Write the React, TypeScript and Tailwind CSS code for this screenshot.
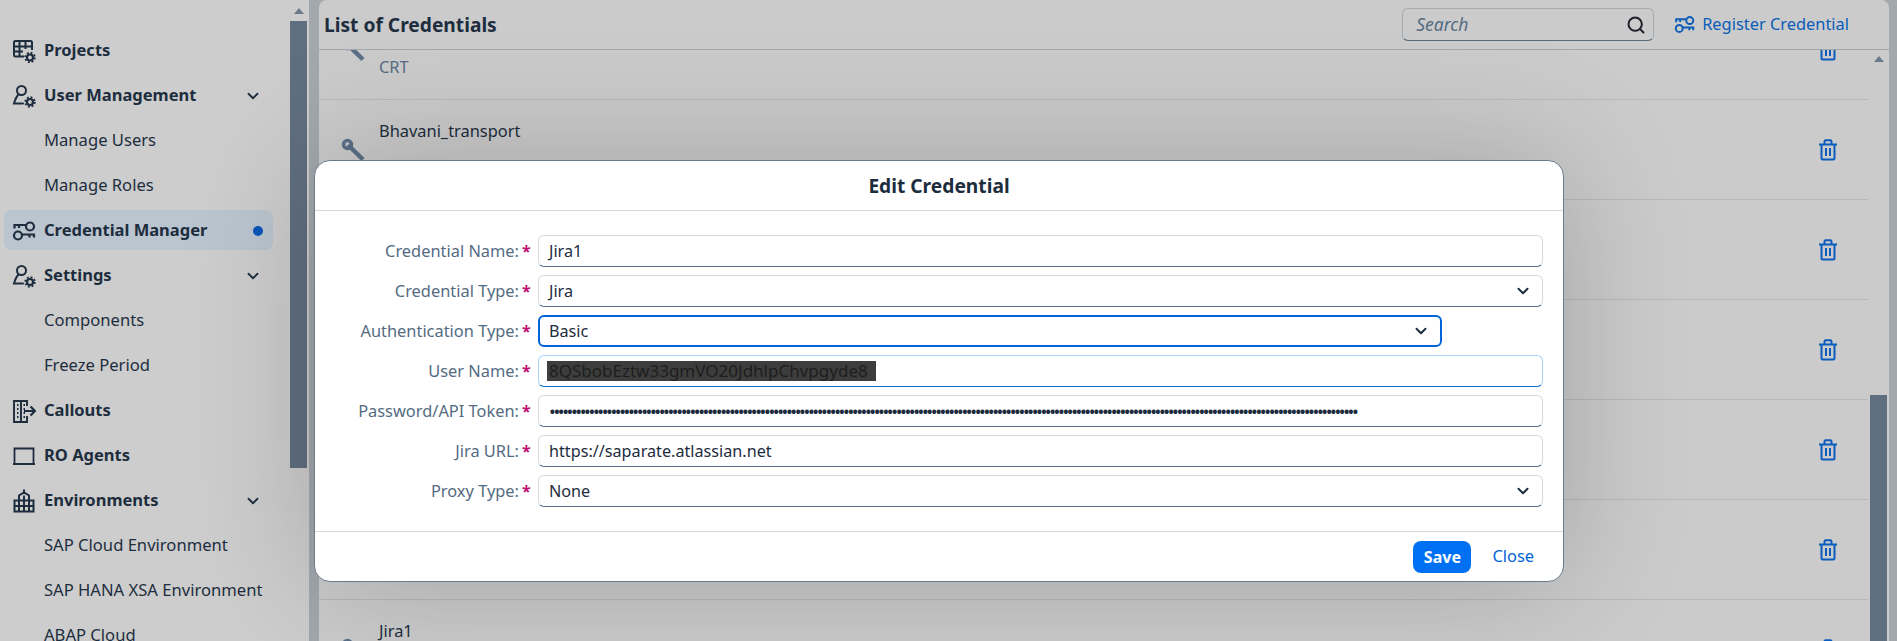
import React from 'react';
import { ChevronDown, Search } from 'lucide-react';

const font = { fontFamily: '"Noto Sans", sans-serif' };

const Gear = ({ x, y }: { x: number; y: number }) => (
  <g>
    <circle cx={x} cy={y} r="3" fill="none" stroke="currentColor" strokeWidth="2.2" />
    <circle cx={x} cy={y} r="4.8" fill="none" stroke="currentColor" strokeWidth="1.8" strokeDasharray="1.9 1.87" />
  </g>
);

const ProjectsIcon = () => (
  <svg viewBox="0 0 24 24" className="w-6 h-6" fill="none" stroke="currentColor" strokeWidth="2">
    <path d="M12 17.500H3.500a1.500 1.500 0 0 1-1.500-1.500V3.500A1.500 1.500 0 0 1 3.500 2h15A1.500 1.500 0 0 1 20 3.500V11" />
    <path d="M2 7.500h18M2 12.500h9M7.500 2v15M13.500 2v8" />
    <Gear x={18} y={18.5} />
  </svg>
);

const UserGearIcon = () => (
  <svg viewBox="0 0 24 24" className="w-6 h-6" fill="none" stroke="currentColor" strokeWidth="2">
    <circle cx="9.500" cy="6.500" r="4.500" />
    <path d="M6.500 10.500C4 13 3 16 2 19.500h9" strokeLinecap="round" />
    <Gear x={18} y={18} />
  </svg>
);

const KeysIcon = ({ className = 'w-6 h-6' }: { className?: string }) => (
  <svg viewBox="0 0 24 24" className={className} fill="none" stroke="currentColor" strokeWidth="2.2">
    <circle cx="18" cy="7.500" r="4" />
    <path d="M14 6H2.500v3.500M7 6v3" />
    <circle cx="6" cy="16.500" r="4" />
    <path d="M10 15.500h12v3M17.500 15.500v3" />
  </svg>
);

const CalloutsIcon = () => (
  <svg viewBox="0 0 24 24" className="w-6 h-6" fill="none" stroke="currentColor" strokeWidth="1.9">
    <path d="M15 7V2H2v21h13v-6M9 2v21" />
    <path d="M5 6h1.500M5 10h1.500M5 14h1.500M5 18h1.500M11.500 6h1.500M11.500 10h1.500M11.500 14h1.500M11.500 18h1.500" strokeWidth="2" />
    <path d="M12 12h10.500M18.500 7.500l4.500 4.500-4.500 4.500" strokeWidth="2.200" />
  </svg>
);

const LaptopIcon = () => (
  <svg viewBox="0 0 24 24" className="w-6 h-6" fill="none" stroke="currentColor" strokeWidth="1.8">
    <path d="M2.500 20V4.500h19V20M1 20h22" />
  </svg>
);

const BuildingIcon = () => (
  <svg viewBox="0 0 24 24" className="w-6 h-6" fill="none" stroke="currentColor" strokeWidth="2">
    <path d="M2.500 22.500v-11H7V6.500l5-3 5 3v5h4.500v11zM12 0.500v3M2.500 17h19M7 11.500v11M12 6.500v16M17 11.500v11M7 11.500h10" />
  </svg>
);

const TrashIcon = () => (
  <svg viewBox="0 0 20 22" className="w-[20px] h-[22px] text-[#0a5cbe]" fill="none" stroke="currentColor" strokeWidth="2">
    <path d="M1 5.500h18M3.500 5.500v13.500a1.500 1.500 0 0 0 1.500 1.500h10a1.500 1.500 0 0 0 1.500-1.500V5.500M6.500 5.500V2.500a1.200 1.200 0 0 1 1.200-1.200h4.600a1.200 1.200 0 0 1 1.200 1.200v3M8 9v8M12 9v8" />
  </svg>
);

const KeyIcon = () => (
  <svg viewBox="0 0 24 24" className="w-6 h-6 text-[#5b7088]" fill="none">
    <path d="M7 7l15 14.500" stroke="currentColor" strokeWidth="4.500" />
    <circle cx="6.500" cy="6.500" r="4" stroke="currentColor" strokeWidth="3.500" />
  </svg>
);

const nav: { label: string; icon?: React.ReactNode; chevron?: boolean; active?: boolean }[] = [
  { label: 'Projects', icon: <ProjectsIcon /> },
  { label: 'User Management', icon: <UserGearIcon />, chevron: true },
  { label: 'Manage Users' },
  { label: 'Manage Roles' },
  { label: 'Credential Manager', icon: <KeysIcon />, active: true },
  { label: 'Settings', icon: <UserGearIcon />, chevron: true },
  { label: 'Components' },
  { label: 'Freeze Period' },
  { label: 'Callouts', icon: <CalloutsIcon /> },
  { label: 'RO Agents', icon: <LaptopIcon /> },
  { label: 'Environments', icon: <BuildingIcon />, chevron: true },
  { label: 'SAP Cloud Environment' },
  { label: 'SAP HANA XSA Environment' },
  { label: 'ABAP Cloud' },
];

const rows = [
  { name: '', sub: 'CRT' },
  { name: 'Bhavani_transport', sub: 'Transport Management Service' },
  { name: '', sub: '' },
  { name: '', sub: '' },
  { name: '', sub: '' },
  { name: '', sub: '' },
  { name: 'Jira1', sub: '' },
];

const Sidebar = () => (
  <aside className="w-[309px] shrink-0 flex bg-[#cdcdcd] overflow-hidden">
    <div className="w-[290px] shrink-0 pt-[28px] pl-1 pr-[17px]">
      {nav.map((item) => (
        <div
          key={item.label}
          className={`h-[45px] flex items-center ${item.active ? 'relative' : ''}`}
        >
          {item.active && <div className="absolute left-0 right-0 top-[2px] h-[40px] rounded-lg bg-[#bac5cf]" />}
          <div className="relative w-[40px] pl-[8px] shrink-0 text-[#1d2d3e]">{item.icon}</div>
          <span
            className={`relative whitespace-nowrap text-[#1d2d3e] ${item.icon ? 'text-[16.5px] font-bold' : 'text-[16.6px] font-normal'}`}
          >
            {item.label}
          </span>
          {item.chevron && <ChevronDown strokeWidth={2.4} className="ml-auto mr-[11px] w-[18px] h-[18px] text-[#1d2d3e]" />}
          {item.active && <div className="relative ml-auto mr-[10px] w-[10px] h-[10px] rounded-full bg-[#0a56b8]" />}
        </div>
      ))}
    </div>
    <div className="w-[17px] shrink-0 flex flex-col items-center">
      <div className="h-[21px] flex items-center justify-center">
        <div className="w-0 h-0 border-x-[5px] border-x-transparent border-b-[6px] border-b-[#6b7b8c]" />
      </div>
      <div className="w-full h-[447px] bg-[#606f80]" />
    </div>
  </aside>
);

const Main = () => (
  <main className="flex-1 min-w-0 flex flex-col ml-[10px] mr-[8px] rounded-t-lg bg-[#cbcbcb] overflow-hidden">
    <header className="h-[50px] shrink-0 flex items-center pl-[5px] border-b border-[#a4a8ac]">
      <h1 className="pt-[1px] text-[19.2px] font-bold text-[#1d2d3e]">List of Credentials</h1>
      <div className="ml-auto w-[252px] h-[33px] flex items-center pl-[13px] pr-[7px] rounded-md border border-[#a5abb1] border-b-[#556b82]">
        <span className="-mt-[1px] italic text-[17.5px] text-[#556b82]">Search</span>
        <Search strokeWidth={2.4} className="ml-auto w-[20px] h-[20px] text-[#1d2129]" />
      </div>
      <div className="ml-[20px] mr-[40px] flex items-center gap-[7px] text-[#0a5cb8]">
        <KeysIcon className="w-[21px] h-[21px]" />
        <span className="text-[16.4px] whitespace-nowrap">Register Credential</span>
      </div>
    </header>
    <div className="flex-1 min-h-0 flex overflow-hidden">
      <div className="w-[1549px] shrink-0">
        <div className="-mt-[50px]">
          {rows.map((row, i) => (
            <div key={i} className="h-[100px] flex items-center border-b border-[#b5b7b9] pl-[22px] pr-[30px]">
              <KeyIcon />
              <div className="ml-[14px] h-full pt-[19px]">
                <div className="h-[24px] text-[16.4px] leading-[24px] text-[#1d2d3e]">{row.name}</div>
                <div className="mt-[12px] text-[16.4px] leading-[24px] text-[#556b82]">{row.sub}</div>
              </div>
              <div className="ml-auto">
                <TrashIcon />
              </div>
            </div>
          ))}
        </div>
      </div>
      <div className="w-[17px] ml-[2px] shrink-0 flex flex-col items-center">
        <div className="h-[22px] flex items-center justify-center">
          <div className="w-0 h-0 border-x-[5px] border-x-transparent border-b-[6px] border-b-[#6b7b8c]" />
        </div>
        <div className="w-full mt-[327px] h-[300px] bg-[#606f80]" />
      </div>
    </div>
  </main>
);

const Field = ({
  label,
  focused,
  selected,
  short,
  select,
  children,
}: {
  label: string;
  focused?: boolean;
  selected?: boolean;
  short?: boolean;
  select?: boolean;
  children: React.ReactNode;
}) => {
  let box = 'border border-[#d5dadf] border-b-[#556b82] pl-[10px]';
  if (focused) box = 'border-2 border-[#0064d9] pl-[9px]';
  if (selected) box = 'border border-[#a9d0f7] border-b-[#0a6ed1] pl-[10px]';
  return (
    <div className="h-[32px] flex items-center">
      <div className="w-[204px] shrink-0 text-right text-[16.4px] text-[#556b82] whitespace-nowrap">{label}</div>
      <div className="w-[19px] shrink-0 text-[16px] font-bold text-[#c0106f] pl-[3px]">*</div>
      <div
        className={`h-[32px] flex items-center rounded-md pr-[10px] text-[16.2px] text-[#1d2d3e] overflow-hidden ${box} ${
          short ? 'w-[904px]' : 'w-[1005px]'
        }`}
      >
        {children}
        {select && <ChevronDown strokeWidth={2.6} className="ml-auto w-[18px] h-[18px] text-[#1d2d3e]" />}
      </div>
    </div>
  );
};

const Dialog = () => (
  <div className="absolute left-[314px] top-[160px] w-[1250px] h-[422px] flex flex-col rounded-2xl bg-white border border-[#6b7b8c] shadow-[0_0_130px_rgba(0,0,0,0.2)]">
    <div className="h-[50px] shrink-0 flex items-center justify-center pt-[1px] border-b border-[#d9d9d9] text-[19.2px] font-bold text-[#1d2d3e]">
      Edit Credential
    </div>
    <div className="flex-1 flex flex-col gap-[8px] pt-[24px]">
      <Field label="Credential Name:">Jira1</Field>
      <Field label="Credential Type:" select>
        Jira
      </Field>
      <Field label="Authentication Type:" select focused short>
        Basic
      </Field>
      <Field label="User Name:" selected>
        <span className="bg-[#3d3d3d] text-[#1d1d1d] text-[17px] pr-[8px] whitespace-nowrap -ml-[2px] pl-[2px] leading-[20px]">
          8QSbobEztw33gmVO20JdhlpChvpgyde8
        </span>
      </Field>
      <Field label="Password/API Token:">
        <span className="whitespace-nowrap text-[18px] tracking-[-2.38px]">{'•'.repeat(184)}</span>
      </Field>
      <Field label="Jira URL:">https://saparate.atlassian.net</Field>
      <Field label="Proxy Type:" select>
        None
      </Field>
    </div>
    <div className="h-[50px] shrink-0 flex items-center justify-end gap-[21px] pr-[29px] border-t border-[#d9d9d9]">
      <button className="w-[58px] h-[32px] rounded-lg bg-[#0070f2] text-white text-[16px] font-bold">Save</button>
      <button className="text-[16.4px] text-[#0064d9]">Close</button>
    </div>
  </div>
);

export default function App() {
  return (
    <div className="relative w-[1897px] h-[641px] overflow-hidden flex bg-[#a3a8ad]" style={font}>
      <Sidebar />
      <Main />
      <Dialog />
    </div>
  );
}
